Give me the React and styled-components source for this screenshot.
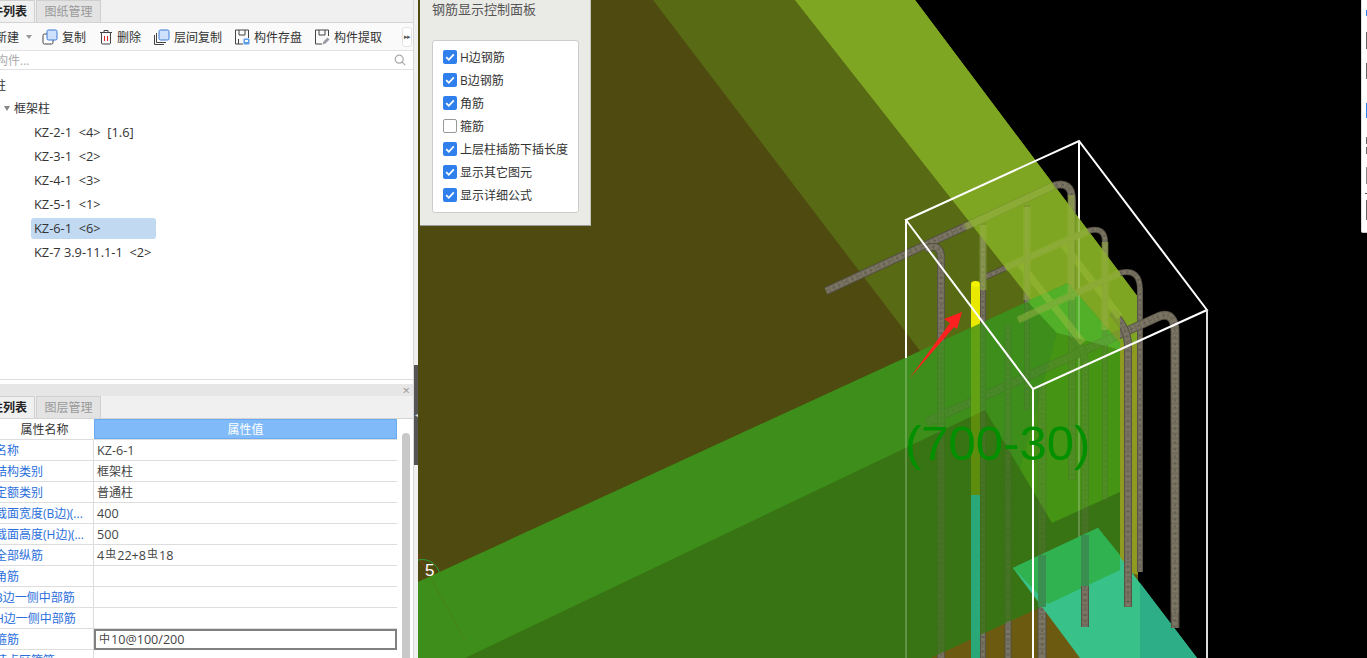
import styled, { createGlobalStyle } from "styled-components";

const GlobalStyle = createGlobalStyle`
  html, body { margin: 0; padding: 0; height: 100%; overflow: hidden; background: #000; }
  body { font-family: "Open Sans", "Noto Sans CJK SC", sans-serif; font-size: 12px; color: #333; }
  * { box-sizing: border-box; }
`;

const Page = styled.div`
  display: flex;
  width: 1367px;
  height: 658px;
  overflow: hidden;
`;

const LeftPanel = styled.div`
  display: flex;
  flex-direction: column;
  flex: 0 0 414px;
  height: 658px;
  overflow: hidden;
  background: #fff;
  border-right: 1px solid #d8d8d8;
`;

const TabStrip = styled.div`
  display: flex;
  flex: 0 0 ${(p) => p.$height}px;
  margin-left: -29px;
  background: #f0f0f0;
  border-bottom: 1px solid #d4d4d4;
`;

const Tab = styled.div`
  display: flex;
  align-items: center;
  justify-content: center;
  width: ${(p) => (p.$active ? 64 : 65)}px;
  margin-left: ${(p) => (p.$active ? 0 : 1)}px;
  padding-bottom: 1px;
  color: ${(p) => (p.$active ? "#222" : "#999")};
  background: ${(p) => (p.$active ? "#f0f0f0" : "#e3e3e3")};
  border: 1px solid #cfcfcf;
  border-bottom: 0;
  font-weight: ${(p) => (p.$active ? 600 : 400)};
  white-space: nowrap;
`;

const Toolbar = styled.div`
  display: flex;
  align-items: center;
  flex: 0 0 28px;
  margin-left: -5px;
  background: #fafafa;
  border-bottom: 1px solid #e2e2e2;
`;

const ToolItem = styled.div`
  display: flex;
  align-items: center;
  flex: none;
  gap: 4px;
  margin-right: ${(p) => p.$gap}px;
  color: #333;
  white-space: nowrap;
`;

const Caret = styled.span`
  width: 0;
  height: 0;
  margin: 1px 0 0 3px;
  border-left: 3px solid transparent;
  border-right: 3px solid transparent;
  border-top: 4px solid #999;
`;

const MoreButton = styled.div`
  display: flex;
  flex: none;
  align-items: center;
  justify-content: center;
  width: 10px;
  height: 20px;
  margin-left: 20px;
  background: #fff;
  border: 1px solid #e4e4e4;
  border-radius: 3px;
  color: #555;
  font-size: 7px;
  letter-spacing: -1px;
`;

const SearchRow = styled.div`
  display: flex;
  align-items: center;
  justify-content: space-between;
  flex: 0 0 19px;
  margin-left: -28px;
  padding-right: 7px;
  color: #aaa;
  border-bottom: 1px solid #e2e2e2;
`;

const Tree = styled.div`
  display: flex;
  flex-direction: column;
  flex: 0 0 310px;
  padding-top: 3px;
  border-bottom: 1px solid #ddd;
`;

const TreeRow = styled.div`
  display: flex;
  align-items: center;
  height: ${(p) => p.$height || 24}px;
  margin-left: ${(p) => p.$indent}px;
  white-space: pre;
  color: #333;
`;

const TreeCaret = styled.span`
  width: 0;
  height: 0;
  margin-right: 4px;
  border-left: 3px solid transparent;
  border-right: 3px solid transparent;
  border-top: 5px solid #888;
`;

const TreeLabel = styled.span`
  display: flex;
  align-items: center;
  width: 125px;
  height: 21px;
  margin-left: -3px;
  padding-left: 3px;
  border-radius: 3px;
  font-size: 12.8px;
  background: ${(p) => (p.$selected ? "#c2d9f2" : "transparent")};
`;

const Spacer = styled.div`
  flex: 0 0 4px;
`;

const CloseBar = styled.div`
  display: flex;
  align-items: center;
  justify-content: flex-end;
  flex: 0 0 12px;
  padding-right: 3px;
  background: #e6e6e6;
  color: #999;
  font-size: 13px;
  line-height: 12px;
`;

const TableArea = styled.div`
  display: flex;
  flex: 1;
  min-height: 0;
  overflow: hidden;
`;

const PropTable = styled.div`
  display: flex;
  flex-direction: column;
  flex: 0 0 402px;
  margin-left: -5px;
`;

const HeadRow = styled.div`
  display: grid;
  grid-template-columns: 99px 1fr;
  flex: 0 0 21px;
  border-bottom: 1px solid #ddd;
`;

const HeadCell = styled.div`
  display: flex;
  align-items: center;
  justify-content: center;
  color: ${(p) => (p.$blue ? "#fff" : "#333")};
  background: ${(p) => (p.$blue ? "#80baf8" : "#fff")};
  border: ${(p) => (p.$blue ? "1px solid #6aaaf0" : "0")};
`;

const PropRow = styled.div`
  display: grid;
  grid-template-columns: 99px 1fr;
  flex: 0 0 21px;
  border-bottom: 1px solid #ddd;
`;

const NameCell = styled.div`
  display: flex;
  align-items: center;
  color: #2b6fdc;
  white-space: nowrap;
  overflow: hidden;
  border-right: 1px solid #ddd;
`;

const ValueCell = styled.div`
  display: flex;
  align-items: center;
  padding-left: ${(p) => (p.$editing ? 2 : 3)}px;
  color: #444;
  font-size: ${(p) => (p.$latin ? 12.6 : 12)}px;
  white-space: pre;
  border: ${(p) => (p.$editing ? "2px solid #808080" : "0")};
  margin-bottom: ${(p) => (p.$editing ? -1 : 0)}px;
`;

const Grade = styled.span`
  position: relative;
  top: -2px;
  font-size: 11px;
  margin: 0 1px;
`;

const ScrollTrack = styled.div`
  flex: 1;
  padding: 14px 3px 0 5px;
`;

const ScrollThumb = styled.div`
  width: 8px;
  height: 100%;
  background: #c8c8c8;
  border-radius: 4px 4px 0 0;
`;

const Divider = styled.div`
  flex: 0 0 4px;
  padding-top: 365px;
  background: #f0f0f0;
`;

const DividerHandle = styled.div`
  display: flex;
  align-items: center;
  justify-content: center;
  height: 100px;
  background: #555;
  color: #ddd;
  font-size: 6px;
  overflow: hidden;
`;

const Viewport = styled.div`
  position: relative;
  flex: 1;
  overflow: hidden;
  background: #000;
`;

const Scene = styled.svg`
  display: block;
`;

const ControlPanel = styled.div`
  position: absolute;
  top: 0;
  left: 2px;
  display: flex;
  flex-direction: column;
  width: 171px;
  height: 226px;
  padding: 0 11px 12px 12px;
  background: #eaeae6;
  border-bottom: 1px solid #999;
  border-right: 1px solid #c4c4bc;
`;

const PanelTitle = styled.div`
  flex: 0 0 40px;
  font-size: 13px;
  line-height: 19px;
  color: #555;
`;

const CheckList = styled.div`
  display: flex;
  flex-direction: column;
  flex: 1;
  padding: 4px 0 0 10px;
  background: #fff;
  border: 1px solid #ccc;
  border-radius: 3px;
`;

const CheckRow = styled.div`
  display: flex;
  align-items: center;
  flex: 0 0 23px;
  gap: 3px;
  color: #333;
`;

const CheckBox = styled.span`
  display: flex;
  align-items: center;
  justify-content: center;
  width: 14px;
  height: 14px;
  border-radius: 2px;
  background: ${(p) => (p.$on ? "#2f80ed" : "#fff")};
  border: ${(p) => (p.$on ? "0" : "1px solid #999")};
`;

const SideStub = styled.div`
  position: absolute;
  top: 0;
  right: 0;
  display: flex;
  flex-direction: column;
  align-items: flex-end;
  width: 6px;
  height: 233px;
  background: #fff;
  border-radius: 0 0 0 2px;
  border-bottom: 1px solid #ccc;
  border-left: 1px solid #ddd;
`;

const StubMark = styled.span`
  width: ${(p) => p.$w || 1}px;
  height: ${(p) => p.$h}px;
  margin-top: ${(p) => p.$top}px;
  background: ${(p) => p.$color};
`;

const CopyIcon = () => (
  <svg width="16" height="16" viewBox="0 0 16 16">
    <rect x="1" y="5" width="10" height="10" rx="1.5" fill="#fff" stroke="#444" />
    <rect x="5" y="1" width="10" height="10" rx="1.5" fill="#cfe0fb" stroke="#3a7bd5" />
  </svg>
);

const TrashIcon = () => (
  <svg width="14" height="16" viewBox="0 0 14 16">
    <path d="M1 3.5h12M5 3.5V1.5h4v2M2.5 3.5v10.5a1 1 0 0 0 1 1h7a1 1 0 0 0 1-1V3.5" fill="none" stroke="#444" />
    <path d="M5.5 7v5M8.5 7v5" stroke="#e02020" />
  </svg>
);

const LayerCopyIcon = () => (
  <svg width="16" height="16" viewBox="0 0 16 16">
    <path d="M.5 6v9.5H10" fill="none" stroke="#444" />
    <path d="M2.5 4v9.5H12" fill="none" stroke="#444" />
    <rect x="5" y="1" width="10" height="10" rx="1.5" fill="#cfe0fb" stroke="#3a7bd5" />
  </svg>
);

const SaveIcon = () => (
  <svg width="16" height="16" viewBox="0 0 16 16">
    <path d="M9 15H1.5V1h13v8" fill="none" stroke="#444" />
    <path d="M5 1v5h6V1M4.5 15v-5" fill="none" stroke="#444" />
    <rect x="9.5" y="9.5" width="6" height="6" rx="1" fill="#5a9bea" />
    <rect x="11" y="11" width="3" height="2" fill="#fff" />
  </svg>
);

const ExtractIcon = () => (
  <svg width="16" height="16" viewBox="0 0 16 16">
    <path d="M8 15H1.5V1h13v6" fill="none" stroke="#444" />
    <path d="M5 1v5h6V1" fill="none" stroke="#444" />
    <path d="M8.5 15.5l1-3 4-4 2 2-4 4z" fill="#9a9aa4" />
  </svg>
);

const SearchIcon = () => (
  <svg width="12" height="12" viewBox="0 0 12 12">
    <circle cx="5.2" cy="5.2" r="4" fill="none" stroke="#aaa" strokeWidth="1.2" />
    <path d="M8.2 8.2l3 3" stroke="#aaa" strokeWidth="1.2" />
  </svg>
);

const CheckMark = () => (
  <svg width="10" height="10" viewBox="0 0 10 10">
    <path d="M1.2 5.2l2.6 2.6 5-5.4" fill="none" stroke="#fff" strokeWidth="1.8" />
  </svg>
);

// reinforcing bar: dark body, lighter core, fine ribs
const Rebar = ({ d, w = 7 }) => (
  <g fill="none" strokeLinejoin="round">
    <path d={d} stroke="#514c40" strokeWidth={w} />
    <path d={d} stroke="#6f6a5a" strokeWidth={w - 1.5} />
    <path d={d} stroke="#7b7564" strokeWidth={w - 3} strokeDasharray="3 2" />
    <path d={d} stroke="#57524a" strokeWidth={1} strokeDasharray="2 5" />
  </g>
);

const BARS = [
  { d: "M826 291L1053 186Q1072 180 1072 200V480", w: 8 },
  { d: "M983 278L1088 231Q1105 226 1105 242V500", w: 6 },
  { d: "M1018 320L1120 273Q1140 268 1140 290V572", w: 6 },
  { d: "M927 422L1160 316Q1175 312 1175 332V628", w: 9 },
  { d: "M925 249Q941 242 941 258V658", w: 8 },
  { d: "M983 223V658", w: 6 },
  { d: "M1008 325V658", w: 7 },
  { d: "M1027 205V410", w: 6 },
  { d: "M1042 385V658", w: 9 },
  { d: "M1071 335Q1086 350 1085 365V627", w: 8 },
  { d: "M1112 312Q1128 328 1128 345V607", w: 8 },
];

const GHOST_BARS = [
  "M965 227L1053 186",
  "M1005 268L1088 231",
  "M1018 320L1120 273",
  "M1017 260L1083 343",
  "M1060 240L1120 317",
  "M1027 207V300",
  "M983 225V290",
  "M1071 195V300",
  "M1105 242V330",
];

// faces that bars sit behind: painted solid first, then again translucent over the bars
const FaceSet = () => (
  <>
    <polygon points="795,0 915,0 1120,273 1120,570 1057,333" fill="#7fa622" />
    <polygon points="418,582 1068,283 1120,343 1120,570 930,658 418,658" fill="#3d8e1a" />
    <polygon points="1027,301 1068,283 1120,343 1120,350 1057,333" fill="#52b028" />
    <polygon points="1057,333 1120,350 1120,492 1052,523 1020,470" fill="#469414" />
    <polygon points="465,658 985,410 1052,523 1120,492 1120,570 930,658" fill="#387413" />
  </>
);

function Scene3D() {
  return (
    <Scene width="949" height="658" viewBox="418 0 949 658">
      <polygon points="418,0 915,0 1138,297 1138,658 418,658" fill="#586a14" />
      <polygon points="418,0 653,0 1140,640 1140,658 418,658" fill="#4f4a10" />
      <polygon points="930,658 1120,570 1138,572 1138,658" fill="#6b5a10" />
      <polygon points="1120,345 1138,345 1138,575 1120,570" fill="#8f9a20" />
      <polygon points="1120,273 1138,297 1138,345 1120,345" fill="#7fa622" />
      <FaceSet />

      <path d="M418 555L465 640" stroke="#a03a20" strokeWidth="1" opacity="0.7" />
      <path d="M418 560A18 18 0 0 1 440 580" fill="none" stroke="#2aa040" />

      <path d="M906 220V658M1079 141V586" stroke="#fff" strokeWidth="2" />
      {BARS.map((b) => (
        <Rebar key={b.d} d={b.d} w={b.w} />
      ))}
      <rect x="971" y="284" width="9" height="212" fill="#e8e800" />
      <ellipse cx="975.5" cy="284" rx="4.5" ry="3" fill="#f4f400" />
      <g opacity="0.78">
        <FaceSet />
      </g>

      <polygon points="1013,568 1098,528 1197,658 1080,658" fill="#38c28a" />
      <polygon points="1013,568 1098,528 1120,555 1120,570 1048,604" fill="#2fb24f" />
      <polygon points="1140,583 1197,658 1140,658" fill="#2eae86" />
      <path d="M1042 555V607M1085 535V586" stroke="#3a8f50" strokeWidth="8" />
      <Rebar d="M1085 586V627" w={8} />
      <Rebar d="M1128 558V607" w={8} />
      <Rebar d="M1175 612V628" w={8} />
      <rect x="971" y="495" width="9" height="163" fill="#2aa878" />

      <g fill="none" stroke="#a0c040" opacity="0.45">
        {GHOST_BARS.map((d) => (
          <path key={d} d={d} strokeWidth="7" />
        ))}
      </g>

      <path d="M906 220L1079 141L1207 310L1033 389Z" fill="none" stroke="#fff" strokeWidth="2" />
      <path d="M906 220V358M1033 389V658" stroke="#fff" strokeWidth="2" fill="none" />
      <path d="M1207 310V658" stroke="#ddd" strokeWidth="2" />

      <polygon points="962,312 944,319 950,323 909,379 954,327 957,329" fill="#ff2020" />

      <text x="905" y="460" fontFamily="Liberation Sans, sans-serif" fontSize="49" fill="#009000">
        (700-30)
      </text>
      <text x="425" y="576" fontFamily="Liberation Sans, sans-serif" fontSize="17" fill="#fff">
        5
      </text>
    </Scene>
  );
}

const TREE_ITEMS = [
  { label: "KZ-2-1  <4>  [1.6]" },
  { label: "KZ-3-1  <2>" },
  { label: "KZ-4-1  <3>" },
  { label: "KZ-5-1  <1>" },
  { label: "KZ-6-1  <6>", selected: true },
  { label: "KZ-7 3.9-11.1-1  <2>" },
];

const PROPS = [
  { name: "名称", value: "KZ-6-1", latin: true },
  { name: "结构类别", value: "框架柱" },
  { name: "定额类别", value: "普通柱" },
  { name: "截面宽度(B边)(...", value: "400", latin: true },
  { name: "截面高度(H边)(...", value: "500", latin: true },
  {
    name: "全部纵筋",
    latin: true,
    value: (
      <>
        4<Grade>虫</Grade>22+8<Grade>虫</Grade>18
      </>
    ),
  },
  { name: "角筋", value: "" },
  { name: "B边一侧中部筋", value: "" },
  { name: "H边一侧中部筋", value: "" },
  {
    name: "箍筋",
    latin: true,
    value: (
      <>
        <Grade>中</Grade>10@100/200
      </>
    ),
    editing: true,
  },
  { name: "节点区箍筋", value: "" },
];

const CHECKS = [
  { label: "H边钢筋", on: true },
  { label: "B边钢筋", on: true },
  { label: "角筋", on: true },
  { label: "箍筋", on: false },
  { label: "上层柱插筋下插长度", on: true },
  { label: "显示其它图元", on: true },
  { label: "显示详细公式", on: true },
];

const STUB_MARKS = [
  { top: 10, h: 6, color: "#2f80ed" },
  { top: 16, h: 17, color: "#666" },
  { top: 14, h: 16, color: "#666" },
  { top: 24, h: 15, color: "#2f80ed" },
  { top: 19, h: 7, color: "#666" },
  { top: 3, h: 7, color: "#666" },
  { top: 13, h: 17, color: "#888" },
  { top: 9, h: 1, color: "#555", w: 2 },
  { top: 6, h: 20, color: "#666" },
];

export default function App() {
  return (
    <Page>
      <GlobalStyle />
      <LeftPanel>
        <TabStrip $height={23}>
          <Tab $active>构件列表</Tab>
          <Tab>图纸管理</Tab>
        </TabStrip>
        <Toolbar>
          <ToolItem $gap={10}>
            新建
            <Caret />
          </ToolItem>
          <ToolItem $gap={13}>
            <CopyIcon />
            复制
          </ToolItem>
          <ToolItem $gap={13}>
            <TrashIcon />
            删除
          </ToolItem>
          <ToolItem $gap={12}>
            <LayerCopyIcon />
            层间复制
          </ToolItem>
          <ToolItem $gap={12}>
            <SaveIcon />
            构件存盘
          </ToolItem>
          <ToolItem $gap={0}>
            <ExtractIcon />
            构件提取
          </ToolItem>
          <MoreButton>▸▸</MoreButton>
        </Toolbar>
        <SearchRow>
          <span>搜索构件...</span>
          <SearchIcon />
        </SearchRow>
        <Tree>
          <TreeRow $indent={-6} $height={23}>
            柱
          </TreeRow>
          <TreeRow $indent={4} $height={24}>
            <TreeCaret />
            框架柱
          </TreeRow>
          {TREE_ITEMS.map((item) => (
            <TreeRow key={item.label} $indent={34}>
              <TreeLabel $selected={item.selected}>{item.label}</TreeLabel>
            </TreeRow>
          ))}
        </Tree>
        <Spacer />
        <CloseBar>×</CloseBar>
        <TabStrip $height={23}>
          <Tab $active>属性列表</Tab>
          <Tab>图层管理</Tab>
        </TabStrip>
        <TableArea>
          <PropTable>
            <HeadRow>
              <HeadCell>属性名称</HeadCell>
              <HeadCell $blue>属性值</HeadCell>
            </HeadRow>
            {PROPS.map((row) => (
              <PropRow key={row.name}>
                <NameCell>{row.name}</NameCell>
                <ValueCell $editing={row.editing} $latin={row.latin}>
                  {row.value}
                </ValueCell>
              </PropRow>
            ))}
          </PropTable>
          <ScrollTrack>
            <ScrollThumb />
          </ScrollTrack>
        </TableArea>
      </LeftPanel>
      <Divider>
        <DividerHandle>◂</DividerHandle>
      </Divider>
      <Viewport>
        <Scene3D />
        <ControlPanel>
          <PanelTitle>钢筋显示控制面板</PanelTitle>
          <CheckList>
            {CHECKS.map((c) => (
              <CheckRow key={c.label}>
                <CheckBox $on={c.on}>{c.on && <CheckMark />}</CheckBox>
                {c.label}
              </CheckRow>
            ))}
          </CheckList>
        </ControlPanel>
        <SideStub>
          {STUB_MARKS.map((m, i) => (
            <StubMark key={i} $top={m.top} $h={m.h} $w={m.w} $color={m.color} />
          ))}
        </SideStub>
      </Viewport>
    </Page>
  );
}
